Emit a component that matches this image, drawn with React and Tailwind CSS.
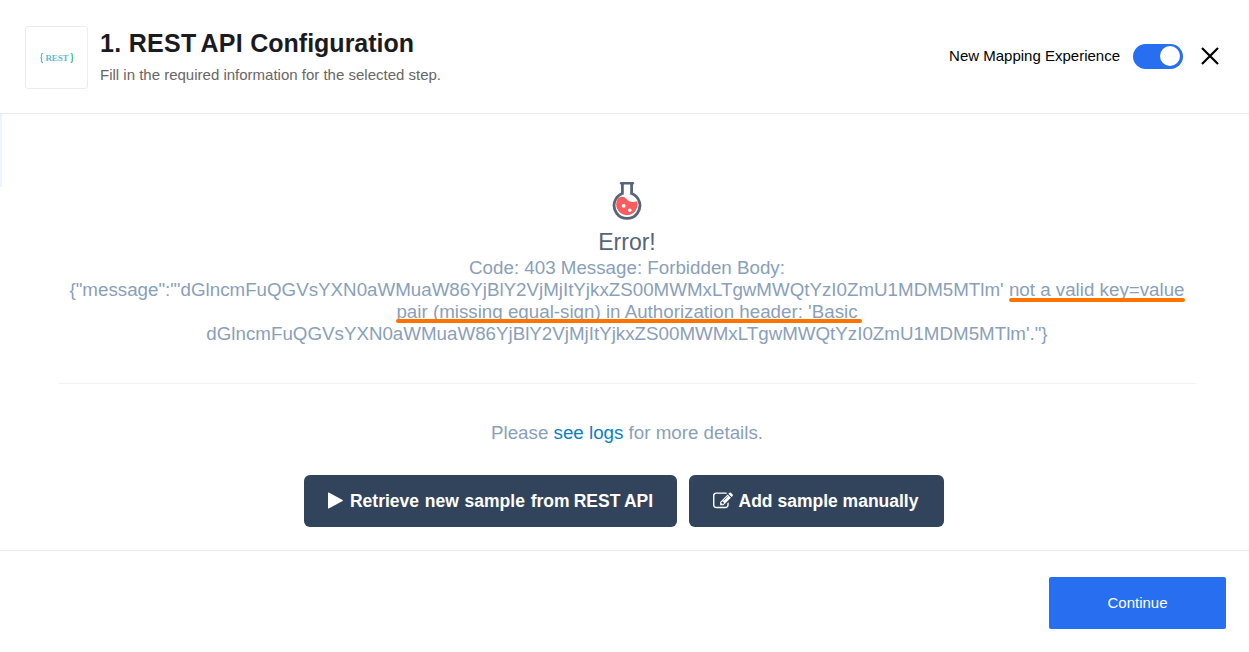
import React from "react";

function RestLogo() {
  return (
    <div className="flex h-[63px] w-[63px] shrink-0 items-center justify-center rounded-[3px] border border-[#ececec] bg-white">
      <svg width="36" height="14" viewBox="0 0 36 14" fill="none">
        <path d="M4 2.500H3.400Q2.500 2.500 2.500 3.600V5.600Q2.500 6.800 1.500 6.800Q2.500 6.800 2.500 8V10.200Q2.500 11.400 3.400 11.400H4" stroke="#45c9a0" strokeWidth="1.200" />
        <text x="6.500" y="10.300" textLength="23" lengthAdjust="spacing" fontSize="9" fontWeight="700" fontFamily="'Liberation Serif', serif" fill="#5cbcd8">REST</text>
        <path d="M31.700 2.500H32.300Q33.200 2.500 33.200 3.600V5.600Q33.200 6.800 34.200 6.800Q33.200 6.800 33.200 8V10.200Q33.200 11.400 32.300 11.400H31.700" stroke="#2fbf8c" strokeWidth="1.200" />
      </svg>
    </div>
  );
}

function Flask() {
  return (
    <svg className="mr-[2px]" width="30" height="40" viewBox="0 0 30 40" fill="none">
      <path d="M10.400 3V12.500A12.900 12.900 0 1 0 19.600 12.500V3" stroke="#56657a" strokeWidth="2.800" />
      <path d="M9.200 2.300H20.800" stroke="#56657a" strokeWidth="2.600" strokeLinecap="round" />
      <path d="M5.900 17.600C8.500 15 12.200 15 14.500 18C17 21.200 20.500 21.500 25.100 20.300A10.700 10.700 0 1 1 5.900 17.600Z" fill="#f95d5f" />
      <circle cx="11.700" cy="24.800" r="1.900" fill="#fff" />
      <circle cx="17.800" cy="29.300" r="1.700" fill="#fff" />
    </svg>
  );
}

function PlayIcon() {
  return (
    <svg className="mr-[7px] mb-[2px]" width="15" height="17" viewBox="0 0 15 17" fill="currentColor">
      <path d="M0 1.100Q0 0.100 0.800 0.500L14.600 8Q15.200 8.500 14.600 8.900L0.800 16.500Q0 16.900 0 15.900Z" />
    </svg>
  );
}

function EditIcon() {
  return (
    <svg className="mr-[6px] mb-px" width="20" height="20" viewBox="0 0 1792 1792" fill="currentColor">
      <path d="M888 1184l116-116-152-152-116 116v56h96v96h56zm440-720q-16-16-33 1l-350 350q-17 17-1 33t33-1l350-350q17-17 1-33zm80 594v190q0 119-84.500 203.500t-203.500 84.500h-832q-119 0-203.500-84.500t-84.500-203.500v-832q0-119 84.500-203.500t203.500-84.500h832q63 0 117 25 15 7 18 23 3 17-9 29l-49 49q-14 14-32 8-23-6-45-6h-832q-66 0-113 47t-47 113v832q0 66 47 113t113 47h832q66 0 113-47t47-113v-126q0-13 9-22l64-64q15-15 35-7t20 29zm-96-738l288 288-672 672h-288v-288zm444 132l-92 92-288-288 92-92q28-28 68-28t68 28l152 152q28 28 28 68t-28 68z" />
    </svg>
  );
}

export default function App() {
  return (
    <div className="flex h-[652px] w-full flex-col overflow-hidden bg-white font-['Liberation_Sans',Arial,sans-serif]">
      <header className="flex h-[114px] shrink-0 border-b border-[#e3eaf2] pl-[25px] pt-[26px]">
        <RestLogo />
        <div className="ml-3 flex flex-col">
          <h1 className="text-[25px] leading-[34px] font-bold whitespace-nowrap text-[#1b1b1f]">
            <span className="tracking-[0.300px]">1. <span className="[word-spacing:-2.500px]">REST API</span> </span>
            Configuration
          </h1>
          <p className="mt-[5px] text-[15px] leading-5 whitespace-nowrap text-[#666]">Fill in the required information for the selected step.</p>
        </div>
        <div className="ml-auto flex h-[60px] items-center pr-[29px]">
          <span className="text-[15px] whitespace-nowrap text-black">New Mapping Experience</span>
          <button aria-label="New Mapping Experience" className="ml-[13px] flex h-[25px] w-[50px] items-center justify-end rounded-full bg-[#276ef1] pr-[3px]">
            <span className="h-5 w-5 rounded-full bg-white" />
          </button>
          <button aria-label="Close" className="ml-[17px]">
            <svg width="20" height="20" viewBox="0 0 20 20" fill="none" stroke="#000" strokeWidth="2.200">
              <path d="M2 2L18 18M18 2L2 18" />
            </svg>
          </button>
        </div>
      </header>

      <main className="flex h-[437px] shrink-0 items-start border-b border-[#ededed]">
        <div className="h-[73px] w-[2px] shrink-0 bg-[#edf3ff]" />
        <section className="mr-[53px] ml-[57px] flex flex-1 flex-col items-center pt-[67px]">
          <Flask />
          <h2 className="mt-[7px] mr-px text-[23px] leading-[28px] text-[#56657a]">Error!</h2>
          <div className="mt-px mr-px text-center text-[18.750px] leading-[22px] whitespace-nowrap text-[#8a9fba]">
            <p>Code: 403 Message: Forbidden Body:</p>
            <p>
              {"{\"message\":\"'dGlncmFuQGVsYXN0aWMuaW86YjBlY2VjMjItYjkxZS00MWMxLTgwMWQtYzI0ZmU1MDM5MTlm' "}
              <span className="relative">
                not a valid key=value
                <span className="absolute top-[19px] left-0 h-1 w-full rounded-full bg-[#ff7300]" />
              </span>
            </p>
            <p>
              <span className="relative">
                pair (missing equal-sign) in Authorization header: 'Basic
                <span className="absolute top-[18px] -right-[4px] left-0 h-1 rounded-full bg-[#ff7300]" />
              </span>
            </p>
            <p>{"dGlncmFuQGVsYXN0aWMuaW86YjBlY2VjMjItYjkxZS00MWMxLTgwMWQtYzI0ZmU1MDM5MTlm'.\"}"}</p>
          </div>
          <hr className="mt-[38px] w-full border-[#f2f2f2]" />
          <p className="mt-[38px] mr-px text-[18.750px] leading-[22px] text-[#8a9fba]">
            Please <a className="text-[#0b7fc7]">see logs</a> for more details.
          </p>
          <div className="mt-[31px] mr-[7px] flex gap-3">
            <button className="flex h-[52px] w-[373px] items-center justify-center rounded-[6px] bg-[#32445c] text-[17.500px] font-bold whitespace-nowrap text-white">
              <PlayIcon />
              <span className="[word-spacing:0.900px]">Retrieve new sample from</span>
              <span className="whitespace-pre [word-spacing:-0.700px]"> REST API</span>
            </button>
            <button className="flex h-[52px] w-[255px] items-center justify-center rounded-[6px] bg-[#32445c] pr-[2px] text-[17.500px] font-bold whitespace-nowrap text-white">
              <EditIcon />
              Add sample manually
            </button>
          </div>
        </section>
      </main>

      <footer className="flex justify-end pt-[26px] pr-[23px]">
        <button className="h-[52px] w-[177px] rounded-[2px] bg-[#276ef1] text-[15px] text-white">Continue</button>
      </footer>
    </div>
  );
}
